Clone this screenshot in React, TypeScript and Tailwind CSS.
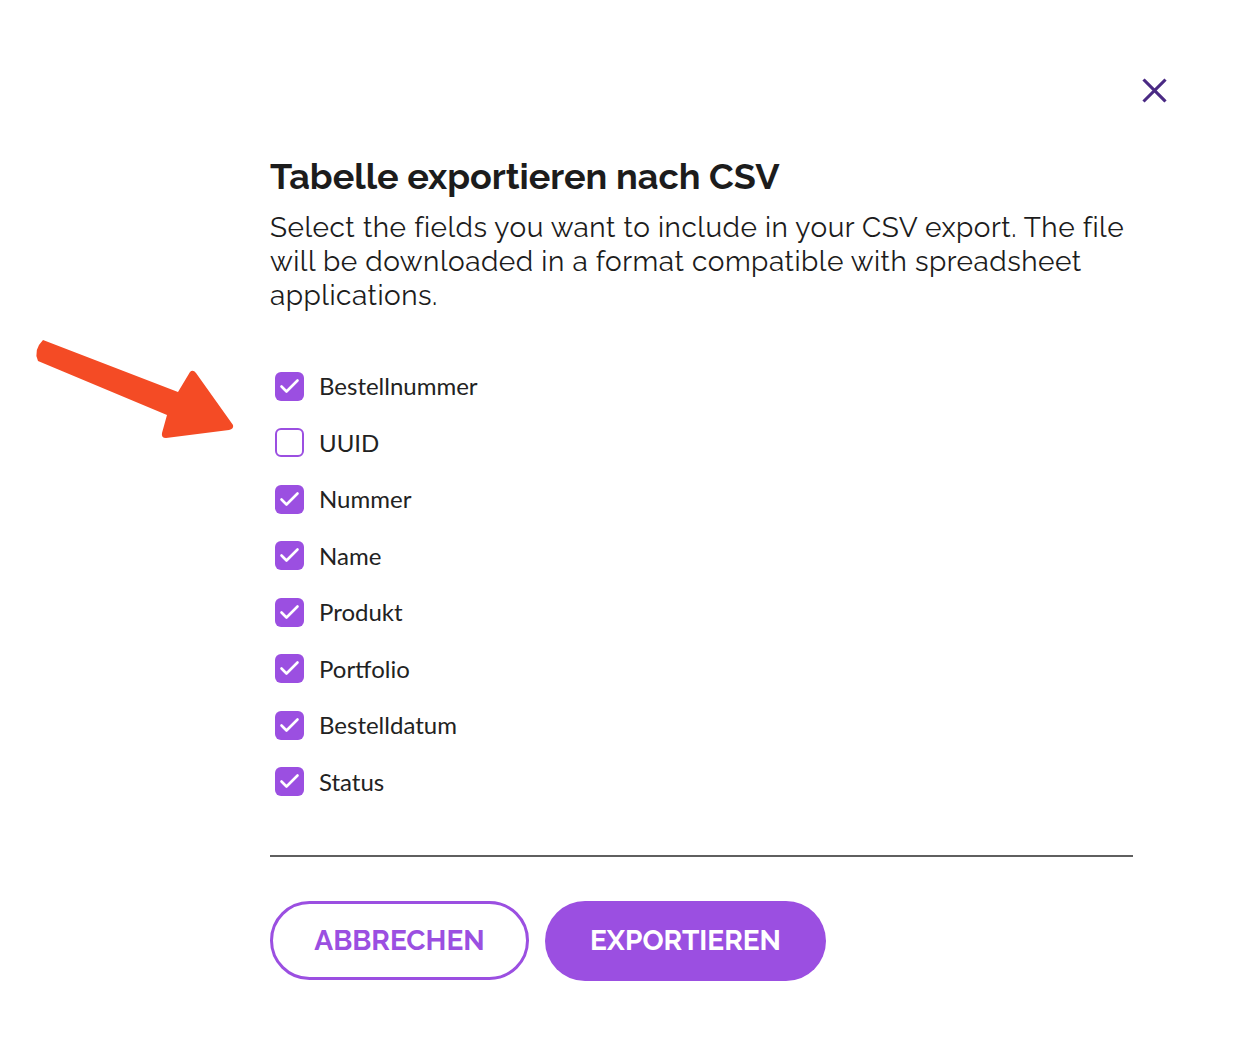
import { useState } from 'react';

const FIELDS = [
  { key: 'order', label: 'Bestellnummer', on: true },
  { key: 'uuid', label: 'UUID', on: false },
  { key: 'number', label: 'Nummer', on: true },
  { key: 'name', label: 'Name', on: true },
  { key: 'product', label: 'Produkt', on: true },
  { key: 'portfolio', label: 'Portfolio', on: true },
  { key: 'date', label: 'Bestelldatum', on: true },
  { key: 'status', label: 'Status', on: true },
];

function Check({ checked }: { checked: boolean }) {
  return checked ? (
    <span className="block h-[29px] w-[29px] rounded-[6px] bg-[#9b4fe1]">
      <svg width="29" height="29" viewBox="0 0 29 29" fill="none" stroke="white" strokeWidth="2.6" strokeLinecap="round" strokeLinejoin="round">
        <path d="M6.5 14.5L11.5 19.5L22.5 8.5" />
      </svg>
    </span>
  ) : (
    <span className="block h-[29px] w-[29px] rounded-[6px] border-[2.5px] border-[#9b4fe1] bg-white" />
  );
}

export default function App() {
  const [fields, setFields] = useState(FIELDS);

  return (
    <div className="relative min-h-[1058px] bg-white font-['Raleway','Lato','Open_Sans',sans-serif] text-[#1c1c1c]">
      {/* annotation arrow */}
      <svg className="absolute left-0 top-0" width="260" height="460" viewBox="0 0 260 460">
        <path
          d="M43 340 L178 392 L190 372 Q193 369 196 373 L233 425 Q234 429 229 430 L166 438 Q161 438 162 433 L167 415 L38 361 Q33 350 43 340 Z"
          fill="#f44b25"
        />
      </svg>

      <div className="flex justify-end pr-[66px] pt-[78px]">
        <button className="flex h-[25px] w-[25px] items-center justify-center text-[#4a2a84]">
          <svg width="25" height="25" viewBox="0 0 24 24" fill="none" stroke="currentColor" strokeWidth="3" strokeLinecap="square">
            <path d="M2.5 2.5L21.5 21.5M21.5 2.5L2.5 21.5" />
          </svg>
        </button>
      </div>

      <div className="ml-[270px] w-[863px] pt-[51px]">
        <h1 className="text-[36px] font-bold leading-[44px]">Tabelle exportieren nach CSV</h1>
        <p className="mt-[13px] text-[28px] leading-[34px] tracking-[0.5px]">
          Select the fields you want to include in your CSV export. The file will be downloaded in a format compatible
          with spreadsheet applications.
        </p>

        <ul className="mt-[45px] flex flex-col font-['Source_Sans_Pro','Lato',sans-serif]">
          {fields.map((f, i) => (
            <li key={f.key} className="flex h-[56.5px] items-center">
              <label
                className="ml-[5px] flex cursor-pointer items-center gap-[15px]"
                onClick={() => setFields(fields.map((g, j) => (j === i ? { ...g, on: !g.on } : g)))}
              >
                <Check checked={f.on} />
                <span className="text-[24px] leading-none text-[#222]">{f.label}</span>
              </label>
            </li>
          ))}
        </ul>

        <div className="mt-[45px] h-[2px] bg-[#5f5f5f]" />

        <div className="mt-[44px] flex gap-[16px]">
          <button className="h-[79px] w-[259px] rounded-full border-[3px] border-[#9b4fe1] text-[28px] font-bold text-[#9b4fe1]">
            ABBRECHEN
          </button>
          <button className="h-[80px] w-[281px] rounded-full bg-[#9b4fe1] text-[28px] font-bold text-white">
            EXPORTIEREN
          </button>
        </div>
      </div>
    </div>
  );
}
